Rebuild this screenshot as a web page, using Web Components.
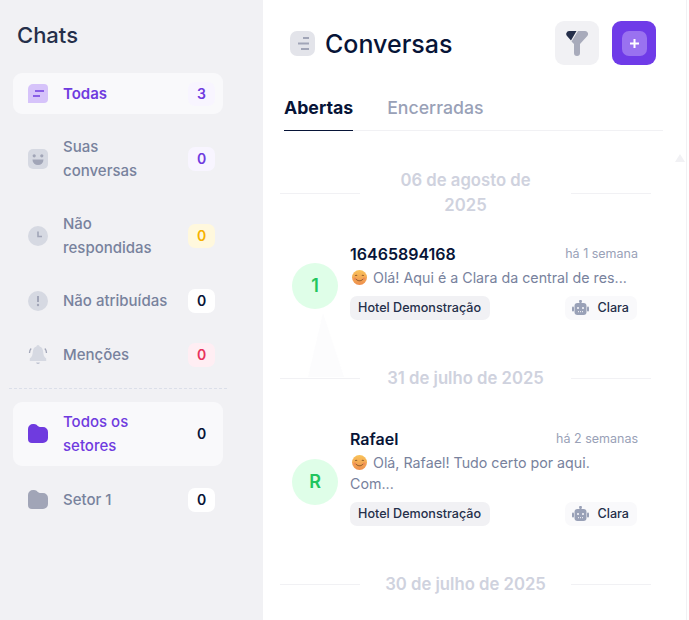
<!DOCTYPE html>
<html lang="pt-BR">
<head>
<meta charset="utf-8">
<title>Conversas</title>
<style>
  html, body { margin: 0; height: 620px; overflow: hidden; background: #fff; }
  body { font-family: Inter, "Liberation Sans", sans-serif; }
</style>
</head>
<body>
<chat-app>
  <chat-sidebar slot="side">
    <nav-item slot="top" icon="todas" tone="purple" active>Todas</nav-item>
    <nav-item slot="top" icon="smile" tone="purple" count="0">Suas<br>conversas</nav-item>
    <nav-item slot="top" icon="clock" tone="yellow" count="0">Não<br>respondidas</nav-item>
    <nav-item slot="top" icon="alert" tone="white" count="0">Não atribuídas</nav-item>
    <nav-item slot="top" icon="bell" tone="red" count="0" style="margin-top:1px">Menções</nav-item>
    <nav-item slot="bottom" icon="folder" tone="plain" count="0" active soft>Todos os<br>setores</nav-item>
    <nav-item slot="bottom" icon="folder" tone="white" count="0" style="margin-top:1px">Setor 1</nav-item>
  </chat-sidebar>
  <chat-panel slot="main">
    <date-divider first>06 de agosto de 2025</date-divider>
    <chat-card name="16465894168" time="há 1 semana" letter="1">Olá! Aqui é a Clara da central de res...</chat-card>
    <date-divider>31 de julho de 2025</date-divider>
    <chat-card name="Rafael" time="há 2 semanas" letter="R">Olá, Rafael! Tudo certo por aqui. Com...</chat-card>
    <date-divider>30 de julho de 2025</date-divider>
  </chat-panel>
</chat-app>

<script>
// icones desenhados a mao, estilo duotone
const ICONS = {
  todas: `<svg width="20" height="20" viewBox="0 0 20 20"><path d="M5 0h11a4 4 0 0 1 4 4v11a4 4 0 0 1-4 4H0V5a5 5 0 0 1 5-5z" fill="#d6c3fa"/><path d="M7 7h9" stroke="#6f3bdf" stroke-width="1.5"/><path d="M5 12h7" stroke="#6f3bdf" stroke-width="1.5"/></svg>`,
  smile: `<svg width="20" height="20" viewBox="0 0 20 20"><rect width="20" height="20" rx="5" fill="#d6d9e2"/><circle cx="6.2" cy="6.8" r="1.6" fill="#a1a5b7"/><circle cx="13.8" cy="6.8" r="1.6" fill="#a1a5b7"/><path d="M4.5 10.5h11a5.5 5.5 0 0 1-11 0z" fill="#a1a5b7"/></svg>`,
  clock: `<svg width="20" height="20" viewBox="0 0 20 20"><circle cx="10" cy="10" r="10" fill="#d6d9e2"/><path d="M10 5.5v5h4" fill="none" stroke="#a1a5b7" stroke-width="1.6"/></svg>`,
  alert: `<svg width="20" height="20" viewBox="0 0 20 20"><circle cx="10" cy="10" r="10" fill="#d6d9e2"/><path d="M10 5v6" stroke="#a1a5b7" stroke-width="2"/><circle cx="10" cy="14" r="1.2" fill="#a1a5b7"/></svg>`,
  bell: `<svg width="20" height="20" viewBox="0 0 20 20"><path d="M10 0c1 0 1.500.8 1.600 1.500 2.600.8 3.400 3 3.600 5.500.2 2.600.8 5 3 6.500v2.500H1.800V13.500c2.200-1.500 2.800-3.900 3-6.500C5 4.500 5.800 2.300 8.400 1.500 8.500.8 9 0 10 0z" fill="#d6d9e2"/><path d="M8 17.500h4l-1 1.500H9z" fill="#c2c6d3"/><path d="M1.500 8c0-2 .5-3.400 1.700-4.500M18.500 8c0-2-.5-3.400-1.700-4.500" fill="none" stroke="#a1a5b7" stroke-width="1.300"/></svg>`,
  folder: (c) => `<svg width="20" height="20" viewBox="0 0 20 20"><path d="M0 5a5 5 0 0 1 5-5h1c2 0 2.500.8 3.500 1.700S11.500 3 13 3h2a5 5 0 0 1 5 5v6a5 5 0 0 1-5 5H4a4 4 0 0 1-4-4z" fill="${c}"/></svg>`,
  robot: `<svg width="17" height="16" viewBox="0 0 17 16"><rect x="7.500" y="0" width="2" height="3" fill="#99a1b7"/><circle cx="8.500" cy="1.200" r="1.200" fill="#99a1b7"/><rect x="2.500" y="3" width="12" height="12" rx="3" fill="#99a1b7"/><rect x="0" y="6.500" width="2" height="5" rx="1" fill="#99a1b7"/><rect x="15" y="6.500" width="2" height="5" rx="1" fill="#99a1b7"/><circle cx="6" cy="8" r="1" fill="#f9f9fb"/><circle cx="11" cy="8" r="1" fill="#f9f9fb"/><path d="M6 11.700h5" stroke="#f9f9fb" stroke-dasharray="1 1"/></svg>`,
  emoji: `<svg width="15" height="15" viewBox="0 0 15 15"><defs><linearGradient id="f" x1="0" y1="0" x2="0" y2="1"><stop offset="0" stop-color="#f9c35a"/><stop offset="1" stop-color="#ee8f4d"/></linearGradient></defs><circle cx="7.500" cy="7.500" r="7.500" fill="url(#f)"/><path d="M3 6c.6-1 1.700-1 2.300 0M9.700 6c.6-1 1.700-1 2.300 0" fill="none" stroke="#7a4a22" stroke-width=".9"/><path d="M3.700 8.800c1.800 2.600 5.800 2.600 7.600 0" fill="none" stroke="#7a4a22" stroke-width=".9"/><circle cx="2.800" cy="8.800" r="1.300" fill="#f27f5c" opacity=".6"/><circle cx="12.200" cy="8.800" r="1.300" fill="#f27f5c" opacity=".6"/></svg>`
};

const TONES = {
  purple: ['#f8f5ff', '#6f3bdf'],
  yellow: ['#fff8dd', '#f6b100'],
  white: ['#ffffff', '#071437'],
  red: ['#ffeef3', '#e8325c'],
  plain: ['transparent', '#071437']
};

class ChatApp extends HTMLElement {
  constructor() {
    super();
    this.attachShadow({mode: 'open'}).innerHTML = `
      <style>
        :host { display: grid; grid-template-columns: 263px 424px; height: 620px; }
      </style>
      <slot name="side"></slot>
      <slot name="main"></slot>`;
  }
}

class ChatSidebar extends HTMLElement {
  constructor() {
    super();
    this.attachShadow({mode: 'open'}).innerHTML = `
      <style>
        :host { display: block; box-sizing: border-box; padding: 21px 40px 0 13px; background: #f1f1f4; }
        h2 { margin: 0 0 24px 4px; font: 500 22px/28px Inter, sans-serif; color: #252f4a; }
        .group { display: flex; flex-direction: column; gap: 12px; }
        .sep { margin: 13px -4px 13px; border-top: 1px dashed #dbdfe9; }
      </style>
      <h2>Chats</h2>
      <div class="group"><slot name="top"></slot></div>
      <div class="sep"></div>
      <div class="group"><slot name="bottom"></slot></div>`;
  }
}

class NavItem extends HTMLElement {
  connectedCallback() {
    const active = this.hasAttribute('active');
    const icon = this.getAttribute('icon');
    const svg = icon === 'folder'
      ? ICONS.folder(active ? '#6f3bdf' : '#a1a5b7')
      : ICONS[icon];
    const count = this.getAttribute('count') ?? '3';
    const [bg, fg] = TONES[this.getAttribute('tone')];
    const labelWeight = this.hasAttribute('soft') ? 500 : (active ? 600 : 500);
    const padY = this.hasAttribute('soft') ? '8px' : '8.5px';
    this.attachShadow({mode: 'open'}).innerHTML = `
      <style>
        :host { display: flex; align-items: center; gap: 15px; padding: ${padY} 8px ${padY} 15px; border-radius: 9px;
          background: ${active ? '#f9f9fb' : 'transparent'}; }
        .icon { width: 20px; height: 20px; flex: none; display: flex; }
        .label { flex: 1; font: ${labelWeight} 15px/24px Inter, sans-serif; color: ${active ? '#6f3bdf' : '#78829d'}; }
        .count { flex: none; width: 27px; height: 24px; border-radius: 7px; display: grid; place-items: center;
          background: ${bg}; color: ${fg}; font: 600 14px/24px Inter, sans-serif; }
      </style>
      <span class="icon">${svg}</span>
      <span class="label"><slot></slot></span>
      <span class="count">${count}</span>`;
  }
}

class ChatPanel extends HTMLElement {
  constructor() {
    super();
    this.attachShadow({mode: 'open'}).innerHTML = `
      <style>
        :host { display: block; position: relative; box-sizing: border-box; background: #fff; overflow: hidden; height: 620px;
          border-right: 1px solid #f1f1f4; }
        header { display: flex; align-items: center; padding: 21px 30px 0 27px; }
        .menu { width: 25px; height: 25px; display: flex; margin-right: 10px; }
        h1 { flex: 1; margin: 2px 0 0; font: 500 25px/42px Inter, sans-serif; color: #071437; }
        button { width: 44px; height: 44px; border: 0; padding: 0; border-radius: 9px; display: grid; place-items: center; }
        .filter { background: #f1f1f4; margin-right: 13px; }
        .add { background: #6f3be8; }
        .tabs { display: flex; gap: 34px; margin: 31px 23px 0 21px; border-bottom: 1px solid #f1f1f4; }
        .tab { padding-bottom: 10px; margin-bottom: -1px; font: 500 17.7px/24px Inter, sans-serif; color: #99a1b7; }
        .tab.on { font-weight: 700; color: #071437; border-bottom: 1px solid #071437; }
        .list { padding: 37px 35px 0 17px; }
        .scroll { position: absolute; left: 412px; top: 154px; width: 0; height: 0;
          border: 5px solid transparent; border-top: 0; border-bottom: 8px solid #f1f1f4; }
        .ghost { position: absolute; left: 45px; top: 313px; }
      </style>
      <header>
        <span class="menu"><svg width="25" height="25" viewBox="0 0 25 25"><rect width="25" height="25" rx="7" fill="#e3e4ea"/><path d="M13 7h6M8 12.500h11M11 18h8" stroke="#a1a5b7" stroke-width="1.800"/></svg></span>
        <h1>Conversas</h1>
        <button class="filter" aria-label="Filtrar"><svg width="22" height="25" viewBox="0 0 22 25"><path d="M12 0h7a3 3 0 0 1 2.300 5L14 13v9a3 3 0 0 1-6 0v-9L5.500 10.500z" fill="#a8abbb"/><path d="M3 0h7.500L5 9.500 1 5a3 3 0 0 1 2-5z" fill="#252f4a"/></svg></button>
        <button class="add" aria-label="Nova conversa"><svg width="25" height="25" viewBox="0 0 25 25"><rect width="25" height="25" rx="7" fill="#9a72f0"/><path d="M12.500 8v9M8 12.500h9" stroke="#fff" stroke-width="2"/></svg></button>
      </header>
      <div class="tabs"><span class="tab on">Abertas</span><span class="tab">Encerradas</span></div>
      <div class="list"><slot></slot></div>
      <span class="scroll"></span>
      <svg class="ghost" width="36" height="64" viewBox="0 0 36 64"><path d="M15 0L0 64h36z" fill="#fcfcfd"/></svg>`;
  }
}

class DateDivider extends HTMLElement {
  constructor() {
    super();
    this.attachShadow({mode: 'open'}).innerHTML = `
      <style>
        :host { display: grid; grid-template-columns: 80px 1fr 80px; align-items: center; min-height: 50px; position: relative; z-index: 1; }
        i { display: block; border-top: 1px solid #f1f1f4; }
        span { padding: 0 20px; text-align: center; font: 600 16.7px/25px Inter, sans-serif; color: #cfd2de; }
      </style>
      <i></i><span><slot></slot></span><i></i>`;
  }
}

class ChatCard extends HTMLElement {
  connectedCallback() {
    this.attachShadow({mode: 'open'}).innerHTML = `
      <style>
        :host { display: flex; align-items: center; gap: 12px; margin: 26px 13px 33px 0; padding: 0 0 0 12px; position: relative; z-index: 1; }
        .avatar { flex: none; width: 46px; height: 46px; margin-top: 8px; border-radius: 50%; background: #dffee8;
          display: grid; place-items: center; color: #22c55e; font: 600 18px/1 Inter, sans-serif; }
        .body { flex: 1; min-width: 0; }
        .top, .tags { display: flex; justify-content: space-between; align-items: center; }
        .name { font: 600 16px/20px Inter, sans-serif; color: #071437; }
        .time { font: 400 12.500px/20px Inter, sans-serif; color: #99a1b7; }
        .msg { margin: 3px 0 8px; padding-right: 8px; font: 400 14.25px/21px Inter, sans-serif; color: #78829d; }
        .msg svg { vertical-align: -2px; margin: 0 2px 0 2px; }
        .tag { display: flex; align-items: center; gap: 8px; height: 24px; padding: 0 9px 0 8px; border-radius: 7px;
          font: 500 12.600px/24px Inter, sans-serif; color: #252f4a; background: #f1f1f4; }
        .tag.bot { background: #f9f9fb; margin-right: 1px; padding: 0 8px 0 7px; }
      </style>
      <span class="avatar">${this.getAttribute('letter')}</span>
      <div class="body">
        <div class="top"><span class="name">${this.getAttribute('name')}</span><span class="time">${this.getAttribute('time')}</span></div>
        <div class="msg">${ICONS.emoji} <slot></slot></div>
        <div class="tags"><span class="tag">Hotel Demonstração</span><span class="tag bot">${ICONS.robot}Clara</span></div>
      </div>`;
  }
}

customElements.define('chat-app', ChatApp);
customElements.define('chat-sidebar', ChatSidebar);
customElements.define('nav-item', NavItem);
customElements.define('chat-panel', ChatPanel);
customElements.define('date-divider', DateDivider);
customElements.define('chat-card', ChatCard);
</script>
</body>
</html>
